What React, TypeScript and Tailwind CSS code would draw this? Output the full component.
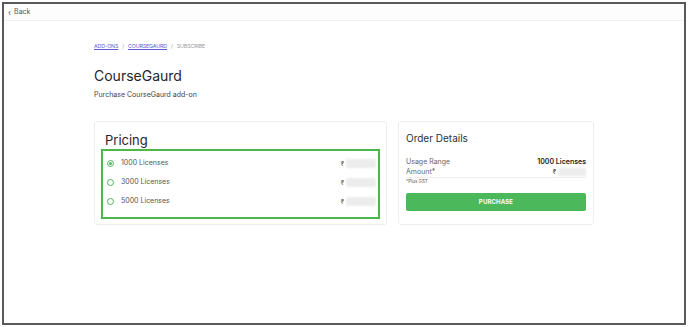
import React from 'react';

const options = [
  { label: '1000 Licenses', checked: true },
  { label: '3000 Licenses', checked: false },
  { label: '5000 Licenses', checked: false },
];

const App = () => {
  return (
    <div className="w-[688px] h-[327px] bg-white p-[2px]" style={{ fontFamily: 'Inter, "Noto Sans", sans-serif' }}>
      <div className="h-full border-2 border-[#5a5a5a] bg-white flex flex-col">
        <div className="h-[17px] border-b border-[#f1f1f1] bg-[#fdfdfd] flex items-center pl-[4px] text-[7px] text-[#555]">
          <span className="mr-[3px] text-[8px] leading-none">‹</span>Back
        </div>

        <div className="pl-[90px] pt-[22px]">
          <div className="flex items-center gap-[4px] text-[5.3px] uppercase tracking-tight">
            <span className="text-[#5b5bd6] underline">Add-ons</span>
            <span className="text-[#999]">/</span>
            <span className="text-[#5b5bd6] underline">Coursegaurd</span>
            <span className="text-[#999]">/</span>
            <span className="text-[#999]">Subscribe</span>
          </div>

          <h1 className="mt-[16px] text-[14px] leading-[18px] font-normal text-[#1f2430]">CourseGaurd</h1>
          <p className="mt-[5px] text-[7px] text-[#444]">Purchase CourseGaurd add-on</p>

          <div className="mt-[21px] flex gap-[11px] items-start">
            <div className="w-[293px] h-[104px] rounded-[3px] border border-[#eeeeee] bg-white px-[6px] pt-[10px]">
              <h2 className="pl-[4px] text-[13px] leading-[16px] text-[#1f2430]">Pricing</h2>
              <div className="mt-[1px] h-[70px] border-[2px] border-[#4cb84c] pl-[4px] pr-[1px] pt-[5px] flex flex-col gap-[5px]">
                {options.map((o) => (
                  <div key={o.label} className="flex items-center h-[14px]">
                    <span className="w-[7px] h-[7px] rounded-full border border-[#4cb85c] flex items-center justify-center">
                      {o.checked && <span className="w-[3px] h-[3px] rounded-full bg-[#4cb85c]" />}
                    </span>
                    <span className="ml-[7px] text-[7px] text-[#555]">{o.label}</span>
                    <span className="ml-auto text-[6px] text-[#555] mr-[2px]">₹</span>
                    <span className="w-[30px] h-[9px] rounded-[2px] bg-[#ececec] blur-[1px] mr-[1px]" />
                  </div>
                ))}
              </div>
            </div>

            <div className="w-[196px] h-[104px] rounded-[3px] border border-[#eeeeee] bg-white px-[7px] pt-[9px]">
              <h2 className="text-[10px] leading-[14px] text-[#2a2f3a]">Order Details</h2>
              <div className="mt-[12px] flex justify-between text-[7px] leading-[10px]">
                <span className="text-[#666]">Usage Range</span>
                <span className="font-semibold text-[#222]">1000 Licenses</span>
              </div>
              <div className="flex justify-between text-[7px] leading-[10px] border-b border-[#eee]">
                <span className="text-[#666]">Amount*</span>
                <span className="flex items-center">
                  <span className="text-[6px] text-[#333] mr-[2px]">₹</span>
                  <span className="w-[28px] h-[8px] bg-[#ececec] blur-[1px]" />
                </span>
              </div>
              <div className="text-[4.5px] text-[#555] mt-[1px]">*Plus GST</div>
              <button className="mt-[6px] w-full h-[18px] rounded-[2px] bg-[#4cb85c] text-white text-[6px] font-bold tracking-wide">
                PURCHASE
              </button>
            </div>
          </div>
        </div>
      </div>
    </div>
  );
};

export default App;
